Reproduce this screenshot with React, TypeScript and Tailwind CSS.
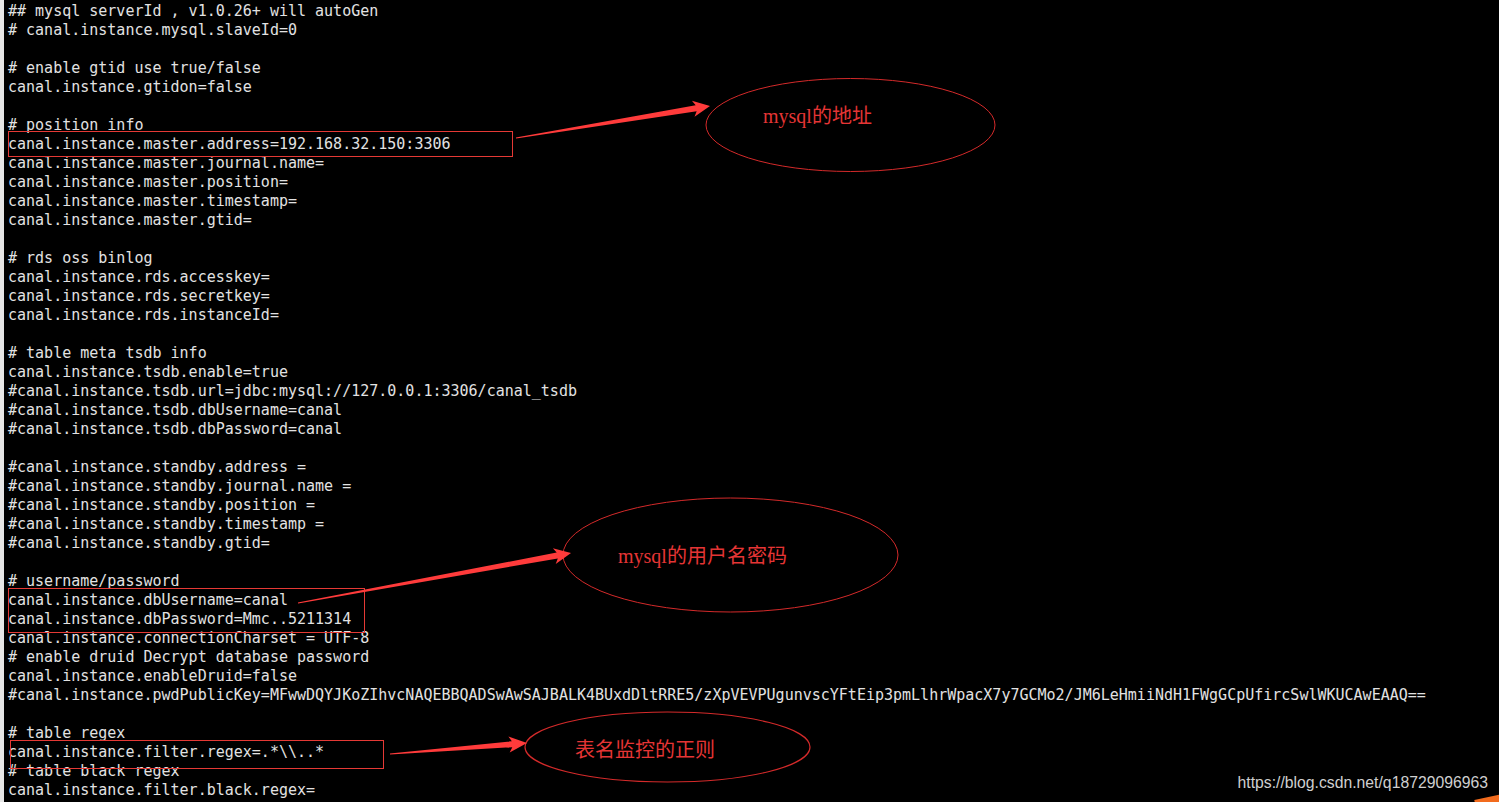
const lines = [
  "## mysql serverId , v1.0.26+ will autoGen",
  "# canal.instance.mysql.slaveId=0",
  "",
  "# enable gtid use true/false",
  "canal.instance.gtidon=false",
  "",
  "# position info",
  "canal.instance.master.address=192.168.32.150:3306",
  "canal.instance.master.journal.name=",
  "canal.instance.master.position=",
  "canal.instance.master.timestamp=",
  "canal.instance.master.gtid=",
  "",
  "# rds oss binlog",
  "canal.instance.rds.accesskey=",
  "canal.instance.rds.secretkey=",
  "canal.instance.rds.instanceId=",
  "",
  "# table meta tsdb info",
  "canal.instance.tsdb.enable=true",
  "#canal.instance.tsdb.url=jdbc:mysql://127.0.0.1:3306/canal_tsdb",
  "#canal.instance.tsdb.dbUsername=canal",
  "#canal.instance.tsdb.dbPassword=canal",
  "",
  "#canal.instance.standby.address =",
  "#canal.instance.standby.journal.name =",
  "#canal.instance.standby.position =",
  "#canal.instance.standby.timestamp =",
  "#canal.instance.standby.gtid=",
  "",
  "# username/password",
  "canal.instance.dbUsername=canal",
  "canal.instance.dbPassword=Mmc..5211314",
  "canal.instance.connectionCharset = UTF-8",
  "# enable druid Decrypt database password",
  "canal.instance.enableDruid=false",
  "#canal.instance.pwdPublicKey=MFwwDQYJKoZIhvcNAQEBBQADSwAwSAJBALK4BUxdDltRRE5/zXpVEVPUgunvscYFtEip3pmLlhrWpacX7y7GCMo2/JM6LeHmiiNdH1FWgGCpUfircSwlWKUCAwEAAQ==",
  "",
  "# table regex",
  "canal.instance.filter.regex=.*\\\\..*",
  "# table black regex",
  "canal.instance.filter.black.regex=",
]

// red arrow, sharp tail -> wide head
const arrowPts = (x1: number, y1: number, x2: number, y2: number, L = 17, W = 8, w = 3) => {
  const dx = x2 - x1
  const dy = y2 - y1
  const len = Math.hypot(dx, dy)
  const ux = dx / len
  const uy = dy / len
  const nx = -uy
  const ny = ux
  const bx = x2 - ux * (L - 3)
  const by = y2 - uy * (L - 3)
  const hx = x2 - ux * L
  const hy = y2 - uy * L
  const p = [
    [x1 + nx * 0.6, y1 + ny * 0.6],
    [bx + nx * w, by + ny * w],
    [hx + nx * W, hy + ny * W],
    [x2, y2],
    [hx - nx * W, hy - ny * W],
    [bx - nx * w, by - ny * w],
    [x1 - nx * 0.6, y1 - ny * 0.6],
  ]
  return p.map((q) => q.join(",")).join(" ")
}

const notes = [
  { x: 763, y: 123, text: "mysql的地址" },
  { x: 618, y: 563, text: "mysql的用户名密码" },
  { x: 575, y: 757, text: "表名监控的正则" },
]

const App = () => {
  return (
    <div className="relative w-[1499px] h-[802px] bg-black overflow-hidden flex">
      <div className="w-[4px] h-full bg-[#e6e6e6]" />
      <div className="pl-[4px] pt-[2px] font-['DejaVu_Sans_Mono',monospace] text-[15px] leading-[19px] text-[#e2e2e2] whitespace-pre">
        {lines.map((l, i) => (
          <div key={i} className="h-[19px]">{l}</div>
        ))}
      </div>

      {/* red annotations drawn on top */}
      <svg className="absolute inset-0 pointer-events-none" width="1499" height="802">
        <rect x="8.5" y="131.5" width="504" height="25" fill="none" stroke="#e53935" strokeWidth="1" />
        <rect x="8.5" y="588.5" width="356" height="44" fill="none" stroke="#e53935" strokeWidth="1" />
        <rect x="10.5" y="740.5" width="373" height="28" fill="none" stroke="#e53935" strokeWidth="1" />

        <ellipse cx="850.5" cy="125" rx="144.5" ry="46.5" fill="none" stroke="#d42a2a" strokeWidth="1" />
        <ellipse cx="730.5" cy="555" rx="167.5" ry="57" fill="none" stroke="#d42a2a" strokeWidth="1" />
        <ellipse cx="667.5" cy="747" rx="142.5" ry="35" fill="none" stroke="#d42a2a" strokeWidth="1.2" />

        <polygon points={arrowPts(516, 138, 710, 106, 17, 8, 3)} fill="#ff3b3b" />
        <polygon points={arrowPts(298, 603, 571, 553, 17, 8, 3)} fill="#ff3b3b" />
        <polygon points={arrowPts(390, 754, 527, 743, 18, 8, 3)} fill="#ff3b3b" />

        {notes.map((n) => (
          <text
            key={n.text}
            x={n.x}
            y={n.y}
            fill="#e53535"
            fontSize="20"
            fontFamily="'Liberation Serif', 'Noto Sans CJK SC', serif"
          >
            {n.text}
          </text>
        ))}
      </svg>

      <div className="absolute right-[11px] bottom-[10px] font-['Liberation_Sans',sans-serif] text-[15.75px] leading-[18px] text-[#cfcfcf]">
        https://blog.csdn.net/q18729096963
      </div>
      <div className="absolute right-[-4px] bottom-[-5px] w-[28px] h-[10px] bg-[#f26b1d] -rotate-12" />
    </div>
  )
}

export default App
